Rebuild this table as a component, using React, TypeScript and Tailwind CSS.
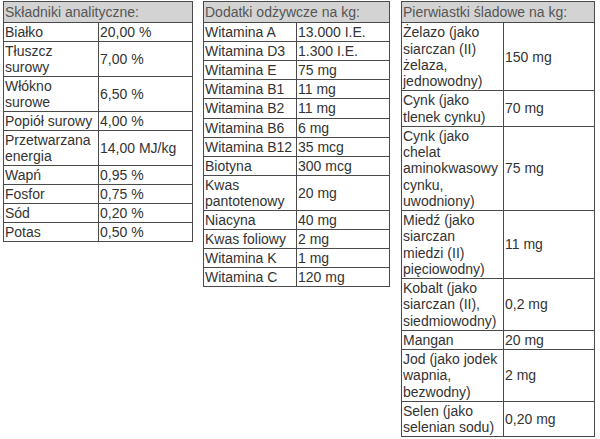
import React from "react";

type Row = [string, string];

const t1: Row[] = [
  ["Białko", "20,00 %"],
  ["Tłuszcz\nsurowy", "7,00 %"],
  ["Włókno\nsurowe", "6,50 %"],
  ["Popiół surowy", "4,00 %"],
  ["Przetwarzana\nenergia", "14,00 MJ/kg"],
  ["Wapń", "0,95 %"],
  ["Fosfor", "0,75 %"],
  ["Sód", "0,20 %"],
  ["Potas", "0,50 %"],
];

const t2: Row[] = [
  ["Witamina A", "13.000 I.E."],
  ["Witamina D3", "1.300 I.E."],
  ["Witamina E", "75 mg"],
  ["Witamina B1", "11 mg"],
  ["Witamina B2", "11 mg"],
  ["Witamina B6", "6 mg"],
  ["Witamina B12", "35 mcg"],
  ["Biotyna", "300 mcg"],
  ["Kwas\npantotenowy", "20 mg"],
  ["Niacyna", "40 mg"],
  ["Kwas foliowy", "2 mg"],
  ["Witamina K", "1 mg"],
  ["Witamina C", "120 mg"],
];

const t3: Row[] = [
  ["Żelazo (jako\nsiarczan (II)\nżelaza,\njednowodny)", "150 mg"],
  ["Cynk (jako\ntlenek cynku)", "70 mg"],
  ["Cynk (jako\nchelat\naminokwasowy\ncynku,\nuwodniony)", "75 mg"],
  ["Miedź (jako\nsiarczan\nmiedzi (II)\npięciowodny)", "11 mg"],
  ["Kobalt (jako\nsiarczan (II),\nsiedmiowodny)", "0,2 mg"],
  ["Mangan", "20 mg"],
  ["Jod (jako jodek\nwapnia,\nbezwodny)", "2 mg"],
  ["Selen (jako\nselenian sodu)", "0,20 mg"],
];

function DataTable({
  title,
  rows,
  tableW,
  col1,
  className,
}: {
  title: string;
  rows: Row[];
  tableW: string;
  col1: string;
  className?: string;
}) {
  return (
    <table
      className={`table-fixed border-collapse border border-[#4a4a4a] text-[14px] text-[#333333] ${tableW} ${className ?? ""}`}
    >
      <colgroup>
        <col className={col1} />
        <col />
      </colgroup>
      <thead>
        <tr>
          <th
            colSpan={2}
            className="border border-[#4a4a4a] bg-[#d3d3d3] px-px py-[2px] text-left font-normal text-[#555555] whitespace-nowrap"
          >
            {title}
          </th>
        </tr>
      </thead>
      <tbody>
        {rows.map(([a, b], i) => (
          <tr key={i}>
            <td className="border border-[#4a4a4a] px-px py-px align-middle whitespace-pre">{a}</td>
            <td className="border border-[#4a4a4a] px-px py-px align-middle whitespace-pre">{b}</td>
          </tr>
        ))}
      </tbody>
    </table>
  );
}

export default function App() {
  return (
    <div
      className="w-[600px] h-[439px] bg-white overflow-hidden"
      style={{ fontFamily: '"Liberation Sans", Arial, sans-serif' }}
    >
      <div className="flex items-start pt-px pl-[3px]">
        <DataTable title="Składniki analityczne:" rows={t1} tableW="w-[190px] leading-[16px]" col1="w-[95px]" />
        <DataTable title="Dodatki odżywcze na kg:" rows={t2} tableW="w-[187px] leading-[16.1px]" col1="w-[93px]" className="ml-[10px]" />
        <DataTable title="Pierwiastki śladowe na kg:" rows={t3} tableW="w-[194px] leading-[16.25px]" col1="w-[102px]" className="ml-[11px]" />
      </div>
    </div>
  );
}
